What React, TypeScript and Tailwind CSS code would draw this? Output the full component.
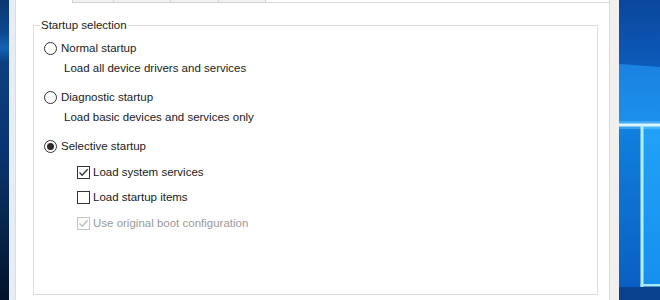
import React from 'react';

// msconfig "General" tab, cropped, with a sliver of the Windows 10 wallpaper on each side

function Radio({ checked }: { checked?: boolean }) {
  return (
    <span className="flex h-[13px] w-[13px] shrink-0 items-center justify-center rounded-full border border-[#333333] bg-white">
      {checked && <span className="h-[7px] w-[7px] rounded-full bg-[#2b2b2b]" />}
    </span>
  );
}

function Check({ checked, disabled }: { checked?: boolean; disabled?: boolean }) {
  const color = disabled ? '#bdbdbd' : '#333333';
  return (
    <span
      className={
        disabled
          ? 'flex h-[13px] w-[13px] shrink-0 items-center justify-center border border-[#c4c4c4] bg-white'
          : 'flex h-[13px] w-[13px] shrink-0 items-center justify-center border border-[#333333] bg-white'
      }
    >
      {checked && (
        <svg width="11" height="11" viewBox="0 0 11 11">
          <polyline points="1.5,5.5 4.2,8.3 9.6,2.2" fill="none" stroke={color} strokeWidth="1.3" />
        </svg>
      )}
    </span>
  );
}

function LeftWallpaper() {
  return (
    <svg width="9" height="300" viewBox="0 0 9 300" className="shrink-0">
      <defs>
        <linearGradient id="lw" x1="0" y1="0" x2="0" y2="1">
          <stop offset="0" stopColor="#0a3770" />
          <stop offset="0.11" stopColor="#0d4890" />
          <stop offset="0.16" stopColor="#1462b4" />
          <stop offset="0.21" stopColor="#0c3f80" />
          <stop offset="0.5" stopColor="#0a3470" />
          <stop offset="0.72" stopColor="#072850" />
          <stop offset="1" stopColor="#03122a" />
        </linearGradient>
      </defs>
      <rect width="9" height="300" fill="url(#lw)" />
    </svg>
  );
}

function RightWallpaper() {
  return (
    <svg width="41" height="300" viewBox="0 0 41 300" className="shrink-0">
      <defs>
        <linearGradient id="rtop" x1="0" y1="0" x2="0" y2="1">
          <stop offset="0" stopColor="#0a479c" />
          <stop offset="1" stopColor="#0c5cbc" />
        </linearGradient>
        <linearGradient id="rmid" x1="0" y1="0" x2="0" y2="1">
          <stop offset="0" stopColor="#1a82e0" />
          <stop offset="1" stopColor="#1c90ee" />
        </linearGradient>
        <linearGradient id="rleft" x1="0" y1="0" x2="0" y2="1">
          <stop offset="0" stopColor="#1080de" />
          <stop offset="1" stopColor="#0a60c2" />
        </linearGradient>
        <linearGradient id="rright" x1="0" y1="0" x2="0" y2="1">
          <stop offset="0" stopColor="#22a2f8" />
          <stop offset="1" stopColor="#1690ee" />
        </linearGradient>
      </defs>
      <rect width="41" height="300" fill="#0a428e" />
      <rect width="41" height="68" fill="url(#rtop)" />
      <polygon points="0,64 41,67 41,125 0,125" fill="url(#rmid)" />
      <rect x="0" y="125" width="23" height="162" fill="url(#rleft)" />
      <rect x="23" y="125" width="18" height="160" fill="url(#rright)" />
      <rect x="0" y="121" width="41" height="8" fill="#8fdcff" opacity="0.35" />
      <rect x="0" y="123.5" width="41" height="3" fill="#d8f6ff" />
      <rect x="21.5" y="125" width="3" height="162" fill="#b8efff" />
      <rect x="21.5" y="284" width="19.5" height="2.5" fill="#a6e8ff" />
    </svg>
  );
}

function TabStrip() {
  return (
    <div className="flex h-[3px] shrink-0">
      <div className="w-[56px]" />
      <div className="w-[41px] border-b border-l border-[#d4d4d4] bg-[#f2f2f2]" />
      <div className="w-[57px] border-b border-l border-[#d4d4d4] bg-[#f2f2f2]" />
      <div className="w-[48px] border-b border-l border-[#d4d4d4] bg-[#f2f2f2]" />
      <div className="w-[48px] border-b border-l border-r border-[#d4d4d4] bg-[#f2f2f2]" />
      <div className="flex-1 border-b border-[#dadada]" />
    </div>
  );
}

export default function App() {
  return (
    <div className="flex h-[300px] w-[660px] overflow-hidden bg-white font-['Liberation_Sans',Arial,sans-serif] text-[11.5px] leading-4 text-[#1a1a1a]">
      <LeftWallpaper />
      <div className="w-[6px] shrink-0 bg-[#e8edf3]" />

      {/* Tab page */}
      <div className="flex w-[595px] shrink-0 flex-col border-l border-r border-[#dcdcdc] bg-white">
        <TabStrip />

        <fieldset className="ml-[17px] mr-[11px] mt-[14px] h-[278px] border border-[#dcdcdc]">
          <legend className="ml-[6px] px-[1px] leading-4">Startup selection</legend>

          <div className="flex flex-col pl-[10px] pt-[7px]">
            <div className="flex h-4 items-center gap-[4px]">
              <Radio />
              <span>Normal startup</span>
            </div>
            <div className="mt-[4px] h-4 pl-[20px]">Load all device drivers and services</div>

            <div className="mt-[13px] flex h-4 items-center gap-[4px]">
              <Radio />
              <span>Diagnostic startup</span>
            </div>
            <div className="mt-[4px] h-4 pl-[20px]">Load basic devices and services only</div>

            <div className="mt-[13px] flex h-4 items-center gap-[4px]">
              <Radio checked />
              <span>Selective startup</span>
            </div>

            <div className="ml-[33px] mt-[10px] flex h-4 items-center gap-[3px]">
              <Check checked />
              <span>Load system services</span>
            </div>
            <div className="ml-[33px] mt-[9px] flex h-4 items-center gap-[3px]">
              <Check />
              <span>Load startup items</span>
            </div>
            <div className="ml-[33px] mt-[10px] flex h-4 items-center gap-[3px] text-[#9a9a9a]">
              <Check checked disabled />
              <span>Use original boot configuration</span>
            </div>
          </div>
        </fieldset>
      </div>

      <div className="w-[9px] shrink-0 bg-[#f2f0ee]" />
      <RightWallpaper />
    </div>
  );
}
